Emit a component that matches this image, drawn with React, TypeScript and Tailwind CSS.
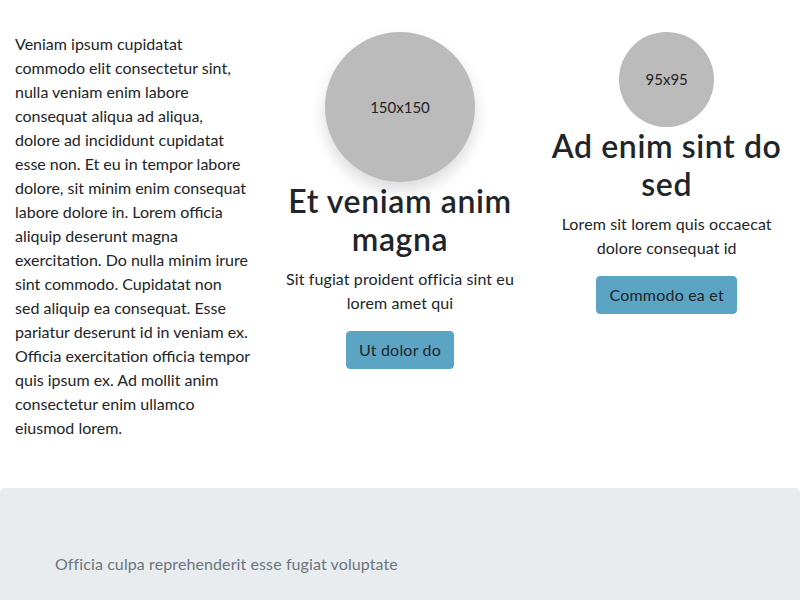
const font = { fontFamily: "Lato, 'Liberation Sans', sans-serif" };

function Feature({
  size,
  shadow,
  title,
  text,
  action,
}: {
  size: number;
  shadow?: boolean;
  title: string;
  text: string;
  action: string;
}) {
  return (
    <div className="flex flex-col items-center text-center">
      <div
        className={
          "flex items-center justify-center rounded-full bg-[#bbbbbb] text-[15px] text-[#222] " +
          (shadow ? "shadow-[0_8px_16px_rgba(0,0,0,0.15)]" : "")
        }
        style={{ width: size, height: size }}
      >
        {size}x{size}
      </div>
      <h2 className="mb-2 text-[32px] font-semibold leading-[38.4px] tracking-[0.6px] text-[#212529]">{title}</h2>
      <p className="mb-4 text-[16px] leading-6 tracking-[0.1px]">{text}</p>
      <button className="rounded-[4px] border border-[#5ba4c4] bg-[#5ba4c4] px-3 py-1.5 text-[16px] leading-6 tracking-[0.2px] text-[#212529]">
        {action}
      </button>
    </div>
  );
}

export default function App() {
  return (
    <div className="h-[600px] overflow-hidden bg-white text-[#212529]" style={font}>
      <div className="grid grid-cols-3 pt-8 pb-8">
        <div className="px-[15px]">
          <p className="mb-4 text-[16px] leading-6">
            Veniam ipsum cupidatat commodo elit consectetur sint, nulla veniam enim labore consequat aliqua ad
            aliqua, dolore ad incididunt cupidatat esse non. Et eu in tempor labore dolore, sit minim enim
            consequat labore dolore in. Lorem officia aliquip deserunt magna exercitation. Do nulla minim irure
            sint commodo. Cupidatat non
            <br />
            sed aliquip ea consequat. Esse pariatur deserunt id in veniam ex. Officia exercitation officia
            tempor quis ipsum ex. Ad mollit anim consectetur enim ullamco eiusmod lorem.
          </p>
        </div>
        <div className="px-[15px]">
          <Feature
            size={150}
            shadow
            title="Et veniam anim magna"
            text="Sit fugiat proident officia sint eu lorem amet qui"
            action="Ut dolor do"
          />
        </div>
        <div className="px-[15px]">
          <Feature
            size={95}
            title="Ad enim sint do sed"
            text="Lorem sit lorem quis occaecat dolore consequat id"
            action="Commodo ea et"
          />
        </div>
      </div>
      <div className="rounded-t-[5px] bg-[#e9ecef] px-[55px] pt-16 pb-16">
        <p className="text-[16px] leading-6 tracking-[0.1px] text-[#6c757d]">
          Officia culpa reprehenderit esse fugiat voluptate
        </p>
      </div>
    </div>
  );
}
